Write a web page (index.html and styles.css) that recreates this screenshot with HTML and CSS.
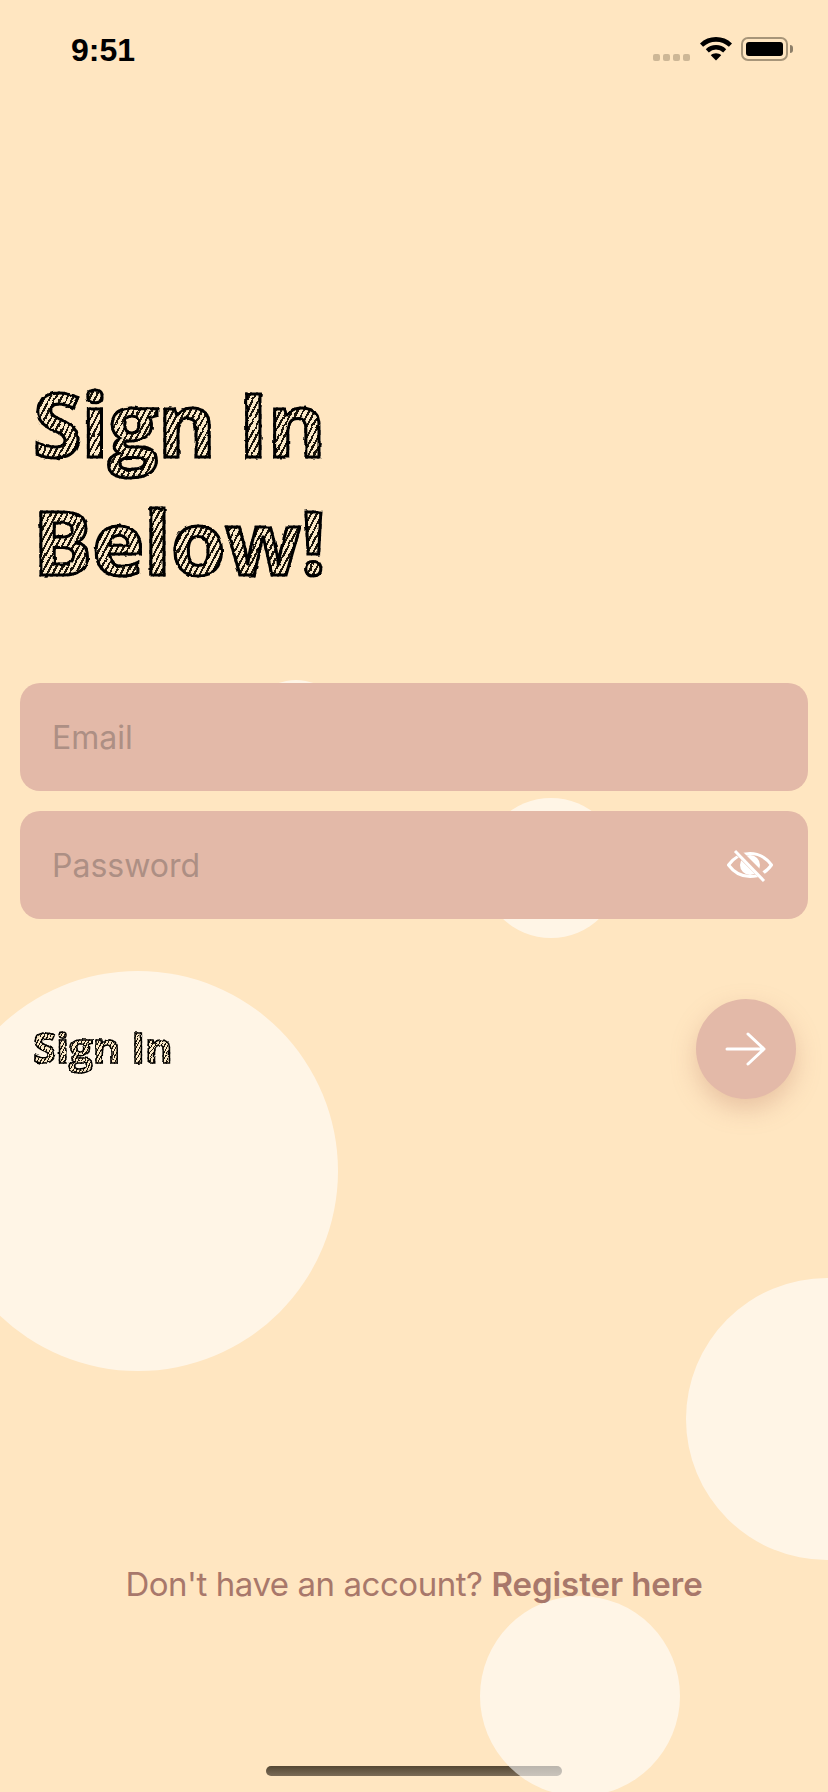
FILE: index.html

```html
<!DOCTYPE html>
<html lang="en">
<head>
  <meta name="viewport" content="width=device-width, initial-scale=1.0">
  <meta charset="UTF-8" />
  <title>Sign In</title>
  <link rel="stylesheet" href="styles.css">
</head>
<body>
  <svg class="filters" width="0" height="0" aria-hidden="true">
    <filter id="rough" x="-5%" y="-5%" width="110%" height="110%">
      <feTurbulence type="fractalNoise" baseFrequency="0.12" numOctaves="2" seed="4" />
      <feDisplacementMap in="SourceGraphic" scale="2.5" xChannelSelector="R" yChannelSelector="G" />
    </filter>
  </svg>

  <div class="screen">
    <div class="home-bar"></div>

    <!-- bubbles in the background -->
    <div class="bubble bubble-a"></div>
    <div class="bubble bubble-b"></div>
    <div class="bubble bubble-c"></div>
    <div class="bubble bubble-d"></div>
    <div class="bubble bubble-e"></div>

    <div class="content">
      <div class="status-bar">
        <span class="time">9:51</span>
        <div class="status-icons">
          <div class="signal"><i></i><i></i><i></i><i></i></div>
          <svg class="wifi" width="32" height="24" viewBox="0 0 32 24">
            <path d="M1.500 8.200C5.300 4.600 10.400 2.400 16 2.400s10.700 2.200 14.500 5.800" fill="none" stroke="#000" stroke-width="4.600" />
            <path d="M7.300 13.800C9.600 11.600 12.600 10.300 16 10.300s6.400 1.300 8.700 3.500" fill="none" stroke="#000" stroke-width="4.400" />
            <path d="M10.800 18.200C12.200 17 14 16.300 16 16.300s3.800.7 5.200 1.900L16 23.600z" fill="#000" />
          </svg>
          <div class="battery"><div class="battery-fill"></div></div>
        </div>
      </div>

      <h1 class="title"><span class="sketch">Sign In<br>Below!</span></h1>

      <form class="login-form">
        <div class="field"><span class="placeholder">Email</span></div>
        <div class="field">
          <span class="placeholder">Password</span>
          <svg class="eye" width="48" height="34" viewBox="0 0 48 34">
            <path d="M2.500 17C8 9.500 15.500 5.500 24 5.500S40 9.500 45.500 17C40 24.500 32.500 28.500 24 28.500S8 24.500 2.500 17z" fill="none" stroke="#fff" stroke-width="3" stroke-linejoin="round" />
            <circle cx="24" cy="17" r="10" fill="#fff" />
            <path d="M11 3l30 30" stroke="#e3b9a8" stroke-width="7" />
            <path d="M9 3l29 30" stroke="#fff" stroke-width="3" />
          </svg>
        </div>
      </form>

      <div class="submit-row">
        <span class="submit-label sketch">Sign In</span>
        <button class="submit-btn" type="button">
          <svg width="42" height="34" viewBox="0 0 42 34">
            <path d="M2 17h37M23 2l16 15-16 15" fill="none" stroke="#fff" stroke-width="3" stroke-linecap="round" stroke-linejoin="round" />
          </svg>
        </button>
      </div>

      <p class="register">Don't have an account? <b>Register here</b></p>
    </div>
  </div>
</body>
</html>
```

FILE: styles.css

```css
html, body {
  margin: 0;
  padding: 0;
}
body {
  font-family: Inter, "Liberation Sans", sans-serif;
  background: #ffe6c1;
}
.filters {
  display: block;
  height: 0;
}
.screen {
  position: relative;
  width: 828px;
  height: 1792px;
  overflow: hidden;
  background: #ffe6c1;
}

/* bubbles */
.bubble {
  position: absolute;
  border-radius: 50%;
  background: rgba(255, 255, 255, 0.6);
}
.bubble-a { left: 246px; top: 680px; width: 100px; height: 100px; }
.bubble-b { left: 481px; top: 798px; width: 140px; height: 140px; }
.bubble-c { left: -62px; top: 971px; width: 400px; height: 400px; }
.bubble-d { left: 686px; top: 1278px; width: 282px; height: 282px; }
.bubble-e { left: 480px; top: 1596px; width: 200px; height: 200px; }

.home-bar {
  position: absolute;
  left: 266px;
  top: 1766px;
  width: 296px;
  height: 10px;
  border-radius: 5px;
  background: linear-gradient(#544733, #7a6b57);
}

.content {
  position: relative;
  display: flex;
  flex-direction: column;
  height: 100%;
}

/* status bar */
.status-bar {
  display: flex;
  justify-content: space-between;
  align-items: flex-start;
  height: 100px;
  padding: 37px 40px 0 71px;
  box-sizing: border-box;
}
.time {
  margin-top: 1px;
  font-family: "Liberation Sans", sans-serif;
  font-weight: 700;
  font-size: 32px;
  line-height: 24px;
  color: #000;
}
.status-icons {
  display: flex;
  align-items: flex-start;
}
.signal {
  display: flex;
  gap: 3px;
  margin-top: 17px;
  margin-right: 10px;
}
.signal i {
  display: block;
  width: 7px;
  height: 7px;
  border-radius: 2px;
  background: #cdb796;
}
.battery {
  position: relative;
  width: 47px;
  height: 24px;
  margin-left: 9px;
  padding: 3px;
  box-sizing: border-box;
  border: 2px solid #a79579;
  border-radius: 7px;
}
.battery::after {
  content: "";
  position: absolute;
  left: 47px;
  top: 6px;
  width: 3px;
  height: 8px;
  border-radius: 0 4px 4px 0;
  background: #8d7f69;
}
.battery-fill {
  height: 100%;
  border-radius: 3px;
  background: #000;
}

/* scribbled lettering */
.sketch {
  display: inline-block;
  font-family: "Open Sans", "Liberation Sans", sans-serif;
  font-weight: 700;
  color: transparent;
  -webkit-text-stroke: 3px #000;
  background: repeating-linear-gradient(118deg, #1a130a 0 2px, #fbe9c8 2px 5px);
  -webkit-background-clip: text;
  background-clip: text;
  filter: url(#rough);
}
.title {
  margin: 264px 0 0 33px;
  font-size: 88px;
  line-height: 118px;
  font-weight: 700;
}

/* form */
.login-form {
  display: flex;
  flex-direction: column;
  gap: 20px;
  margin: 81px 20px 0;
}
.field {
  display: flex;
  justify-content: space-between;
  align-items: center;
  height: 108px;
  padding: 0 34px 0 32px;
  box-sizing: border-box;
  border-radius: 20px;
  background: #e3b9a8;
}
.placeholder {
  font-size: 32px;
  color: #ad8f84;
}
.eye {
  display: block;
}

.submit-row {
  display: flex;
  justify-content: space-between;
  align-items: center;
  margin: 80px 32px 0 33px;
}
.submit-label {
  margin-bottom: 4px;
  font-size: 42px;
  line-height: 60px;
  -webkit-text-stroke: 1.5px #000;
  background: repeating-linear-gradient(118deg, #1a130a 0 1px, #fbe9c8 1px 3px);
  -webkit-background-clip: text;
  background-clip: text;
}
.submit-btn {
  display: flex;
  align-items: center;
  justify-content: center;
  width: 100px;
  height: 100px;
  padding: 0;
  border: none;
  border-radius: 50%;
  background: #e3b9a8;
  box-shadow: 0 10px 24px rgba(190, 130, 105, 0.35);
}

.register {
  margin: auto 0 186px;
  text-align: center;
  font-size: 33px;
  line-height: 44px;
  letter-spacing: -0.45px;
  color: #a8786b;
}
.register b {
  font-weight: 600;
  letter-spacing: -0.05px;
}
```
